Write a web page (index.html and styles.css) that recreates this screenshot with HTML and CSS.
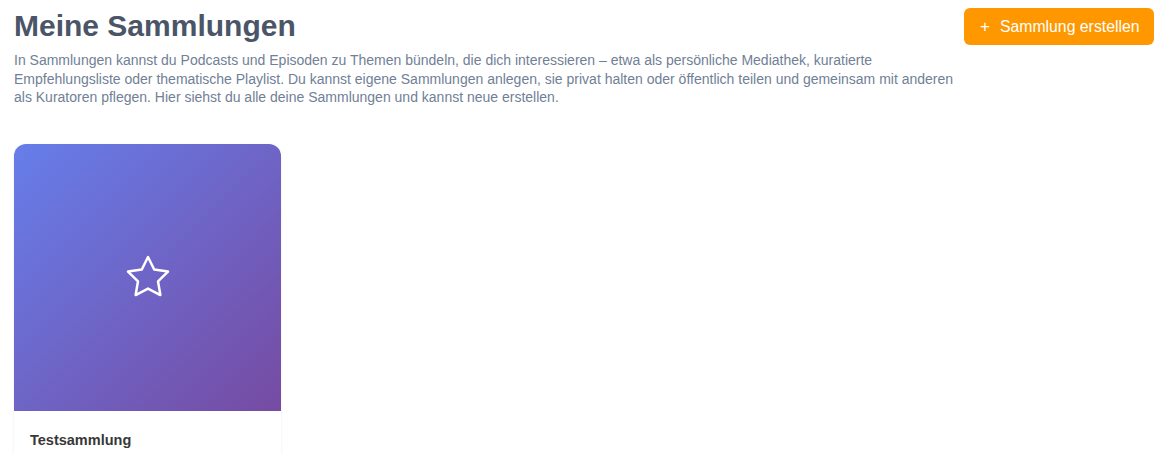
FILE: index.html
```html
<!DOCTYPE html>
<html lang="de">
<head>
<meta charset="utf-8">
<title>Meine Sammlungen</title>
<link rel="stylesheet" href="styles.css">
</head>
<body>
<main class="page">
  <header class="page-header">
    <div class="intro">
      <h1 class="title">Meine Sammlungen</h1>
      <p class="desc">In Sammlungen kannst du Podcasts und Episoden zu Themen bündeln, die dich interessieren – etwa als persönliche Mediathek, kuratierte Empfehlungsliste oder thematische Playlist. Du kannst eigene Sammlungen anlegen, sie privat halten oder öffentlich teilen und gemeinsam mit anderen als Kuratoren pflegen. Hier siehst du alle deine Sammlungen und kannst neue erstellen.</p>
    </div>
    <button class="btn-create"><span class="plus">+</span>Sammlung erstellen</button>
  </header>
  <section class="grid">
    <article class="card">
      <div class="cover">
        <svg class="star" width="48" height="48" viewBox="0 0 24 24" fill="none" stroke="#fff" stroke-width="1.25" stroke-linecap="round" stroke-linejoin="round"><polygon points="12 2 15.09 8.26 22 9.27 17 14.14 18.18 21.02 12 17.77 5.82 21.02 7 14.14 2 9.27 8.91 8.26 12 2"/></svg>
      </div>
      <div class="card-body">
        <h2 class="card-title">Testsammlung</h2>
      </div>
    </article>
  </section>
</main>
</body>
</html>
```
FILE: styles.css
```css
* { box-sizing: border-box; }
html, body { margin: 0; padding: 0; background: #fff; }
body { font-family: "Liberation Sans", Arial, Helvetica, sans-serif; }
.page { padding: 8px 10px 0 14px; }
.page-header { display: flex; justify-content: space-between; align-items: flex-start; gap: 10px; }
.intro { flex: 1; max-width: 945px; }
.title { margin: 0; padding-top: 1px; font-size: 30px; line-height: 34px; font-weight: 700; color: #4a5568; }
.desc { margin: 8px 0 0; font-size: 14px; line-height: 18.5px; color: #718096; }
.btn-create { flex: none; display: inline-flex; align-items: center; height: 37px; width: 190px; padding: 0 14px 0 16px; border: 0; border-radius: 6px; background: #ff9800; color: #fff; font-family: inherit; font-size: 15.8px; cursor: pointer; }
.plus { font-size: 17px; margin-right: 10px; }
.grid { display: grid; grid-template-columns: repeat(auto-fill, 267px); gap: 20px; margin-top: 37px; }
.card { border-radius: 12px; background: #fff; box-shadow: 0 1px 3px rgba(0,0,0,0.08); overflow: hidden; }
.cover { aspect-ratio: 1 / 1; background: linear-gradient(135deg, #667eea 0%, #764ba2 100%); display: flex; align-items: center; justify-content: center; }
.card-body { padding: 21px 16px 16px; }
.card-title { margin: 0; font-size: 14.5px; font-weight: 700; color: #383838; }
```
